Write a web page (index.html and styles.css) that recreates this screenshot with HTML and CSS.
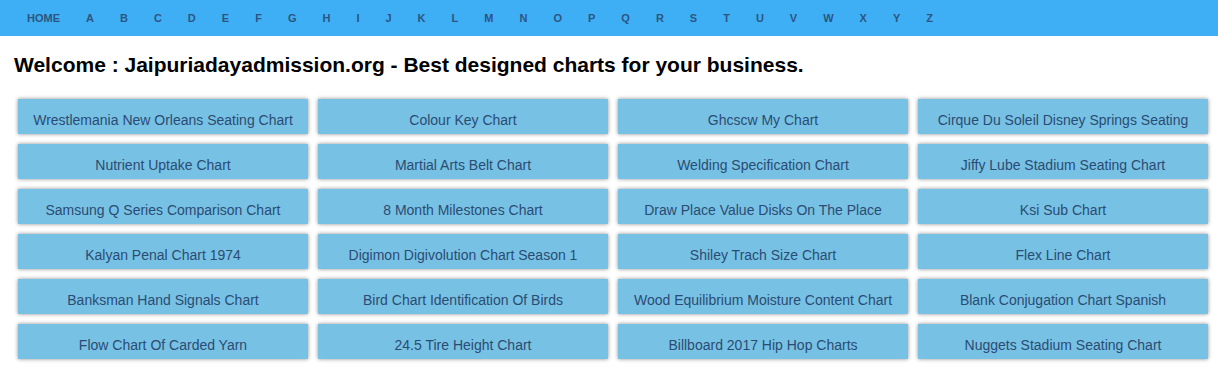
FILE: index.html
```html
<!DOCTYPE html>
<html lang="en">
<head>
<meta charset="utf-8">
<title>Jaipuriadayadmission.org</title>
<link rel="stylesheet" href="styles.css">
</head>
<body>
<nav class="topnav">
  <a href="#">HOME</a><a href="#">A</a><a href="#">B</a><a href="#">C</a><a href="#">D</a><a href="#">E</a><a href="#">F</a><a href="#">G</a><a href="#">H</a><a href="#">I</a><a href="#">J</a><a href="#">K</a><a href="#">L</a><a href="#">M</a><a href="#">N</a><a href="#">O</a><a href="#">P</a><a href="#">Q</a><a href="#">R</a><a href="#">S</a><a href="#">T</a><a href="#">U</a><a href="#">V</a><a href="#">W</a><a href="#">X</a><a href="#">Y</a><a href="#">Z</a>
</nav>
<h1 class="welcome">Welcome : Jaipuriadayadmission.org - Best designed charts for your business.</h1>
<div class="chart-grid">
  <a class="chart" href="#">Wrestlemania New Orleans Seating Chart</a>
  <a class="chart" href="#">Colour Key Chart</a>
  <a class="chart" href="#">Ghcscw My Chart</a>
  <a class="chart" href="#">Cirque Du Soleil Disney Springs Seating</a>
  <a class="chart" href="#">Nutrient Uptake Chart</a>
  <a class="chart" href="#">Martial Arts Belt Chart</a>
  <a class="chart" href="#">Welding Specification Chart</a>
  <a class="chart" href="#">Jiffy Lube Stadium Seating Chart</a>
  <a class="chart" href="#">Samsung Q Series Comparison Chart</a>
  <a class="chart" href="#">8 Month Milestones Chart</a>
  <a class="chart" href="#">Draw Place Value Disks On The Place</a>
  <a class="chart" href="#">Ksi Sub Chart</a>
  <a class="chart" href="#">Kalyan Penal Chart 1974</a>
  <a class="chart" href="#">Digimon Digivolution Chart Season 1</a>
  <a class="chart" href="#">Shiley Trach Size Chart</a>
  <a class="chart" href="#">Flex Line Chart</a>
  <a class="chart" href="#">Banksman Hand Signals Chart</a>
  <a class="chart" href="#">Bird Chart Identification Of Birds</a>
  <a class="chart" href="#">Wood Equilibrium Moisture Content Chart</a>
  <a class="chart" href="#">Blank Conjugation Chart Spanish</a>
  <a class="chart" href="#">Flow Chart Of Carded Yarn</a>
  <a class="chart" href="#">24.5 Tire Height Chart</a>
  <a class="chart" href="#">Billboard 2017 Hip Hop Charts</a>
  <a class="chart" href="#">Nuggets Stadium Seating Chart</a>
</div>
</body>
</html>
```
FILE: styles.css
```css
* { box-sizing: border-box; }

body {
  margin: 0;
  font-family: "Liberation Sans", Arial, sans-serif;
  background: #ffffff;
}

.topnav {
  display: flex;
  align-items: center;
  height: 36px;
  padding-left: 27px;
  gap: 26px;
  background: #3eaff5;
}

.topnav a {
  font-size: 11px;
  font-weight: bold;
  color: #2d5580;
  text-decoration: none;
  line-height: 1;
}

.welcome {
  margin: 16px 0 0 14px;
  font-size: 21px;
  font-weight: bold;
  color: #000000;
  line-height: 26px;
}

.chart-grid {
  display: grid;
  grid-template-columns: repeat(4, 290px);
  grid-auto-rows: 35px;
  gap: 10px;
  margin: 21px 0 0 18px;
  padding-bottom: 10px;
}

.chart {
  display: flex;
  align-items: center;
  justify-content: center;
  padding-top: 7px;
  background: #77c1e5;
  color: #2b4c72;
  font-size: 14px;
  text-decoration: none;
  box-shadow: 0 0 4px rgba(0, 0, 0, 0.45);
  white-space: nowrap;
  overflow: hidden;
}
```
